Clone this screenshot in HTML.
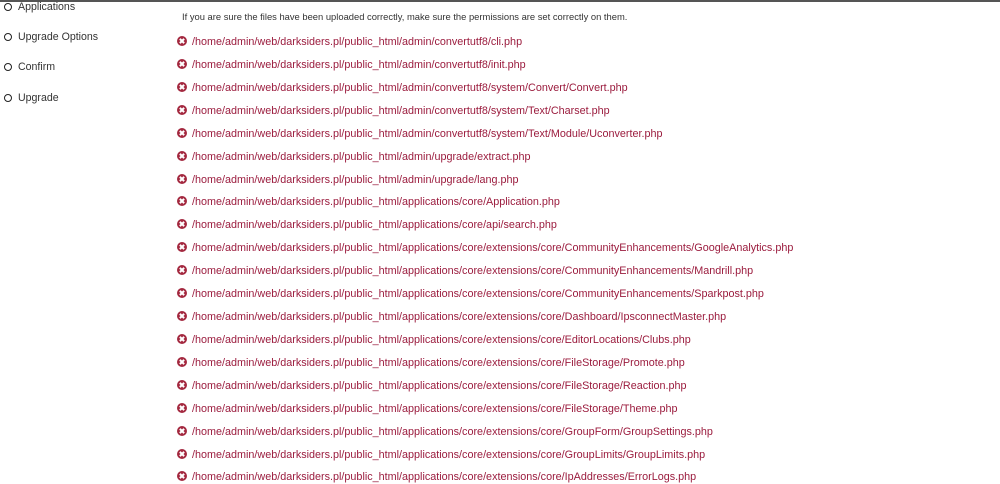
<html><head><style>
body{margin:0;width:1000px;height:482px;background:#fff;font-family:"Liberation Sans",sans-serif;overflow:hidden;position:relative}
.top{position:absolute;left:0;top:0;width:1000px;height:2px;background:#555}
.nav{position:absolute;left:4px;font-size:10.6px;color:#333;line-height:14px}
.nav span{display:inline-block;width:6px;height:6px;border:1.5px solid #222;border-radius:50%;margin-right:6px;vertical-align:-1px}
.msg{position:absolute;left:182px;top:11px;font-size:9.4px;color:#333}
.r{position:absolute;left:177px;font-size:10.8px;color:#9b1c3e;line-height:14px;white-space:nowrap}
.r i{display:inline-block;width:10px;height:10px;border-radius:50%;background:#a3283f;margin-right:5px;vertical-align:-1px;position:relative}
.r i:before,.r i:after{content:"";position:absolute;left:4px;top:2px;width:2px;height:6px;background:#fff;transform:rotate(45deg)}
.r i:after{transform:rotate(-45deg)}
#w{position:absolute;left:0;top:1px;width:1000px;height:482px}
</style></head><body>
<div class="top"></div>
<div class="nav" style="top:0px"><span></span>Applications</div>
<div class="nav" style="top:30px"><span></span>Upgrade Options</div>
<div class="nav" style="top:60px"><span></span>Confirm</div>
<div class="nav" style="top:91px"><span></span>Upgrade</div>
<div class="msg">If you are sure the files have been uploaded correctly, make sure the permissions are set correctly on them.</div>
<div id="w">
<div class="r" style="top:34px"><i></i>/home/admin/web/darksiders.pl/public_html/admin/convertutf8/cli.php</div>
<div class="r" style="top:57px"><i></i>/home/admin/web/darksiders.pl/public_html/admin/convertutf8/init.php</div>
<div class="r" style="top:80px"><i></i>/home/admin/web/darksiders.pl/public_html/admin/convertutf8/system/Convert/Convert.php</div>
<div class="r" style="top:103px"><i></i>/home/admin/web/darksiders.pl/public_html/admin/convertutf8/system/Text/Charset.php</div>
<div class="r" style="top:126px"><i></i>/home/admin/web/darksiders.pl/public_html/admin/convertutf8/system/Text/Module/Uconverter.php</div>
<div class="r" style="top:149px"><i></i>/home/admin/web/darksiders.pl/public_html/admin/upgrade/extract.php</div>
<div class="r" style="top:172px"><i></i>/home/admin/web/darksiders.pl/public_html/admin/upgrade/lang.php</div>
<div class="r" style="top:194px"><i></i>/home/admin/web/darksiders.pl/public_html/applications/core/Application.php</div>
<div class="r" style="top:217px"><i></i>/home/admin/web/darksiders.pl/public_html/applications/core/api/search.php</div>
<div class="r" style="top:240px"><i></i>/home/admin/web/darksiders.pl/public_html/applications/core/extensions/core/CommunityEnhancements/GoogleAnalytics.php</div>
<div class="r" style="top:263px"><i></i>/home/admin/web/darksiders.pl/public_html/applications/core/extensions/core/CommunityEnhancements/Mandrill.php</div>
<div class="r" style="top:286px"><i></i>/home/admin/web/darksiders.pl/public_html/applications/core/extensions/core/CommunityEnhancements/Sparkpost.php</div>
<div class="r" style="top:309px"><i></i>/home/admin/web/darksiders.pl/public_html/applications/core/extensions/core/Dashboard/IpsconnectMaster.php</div>
<div class="r" style="top:332px"><i></i>/home/admin/web/darksiders.pl/public_html/applications/core/extensions/core/EditorLocations/Clubs.php</div>
<div class="r" style="top:355px"><i></i>/home/admin/web/darksiders.pl/public_html/applications/core/extensions/core/FileStorage/Promote.php</div>
<div class="r" style="top:378px"><i></i>/home/admin/web/darksiders.pl/public_html/applications/core/extensions/core/FileStorage/Reaction.php</div>
<div class="r" style="top:401px"><i></i>/home/admin/web/darksiders.pl/public_html/applications/core/extensions/core/FileStorage/Theme.php</div>
<div class="r" style="top:424px"><i></i>/home/admin/web/darksiders.pl/public_html/applications/core/extensions/core/GroupForm/GroupSettings.php</div>
<div class="r" style="top:447px"><i></i>/home/admin/web/darksiders.pl/public_html/applications/core/extensions/core/GroupLimits/GroupLimits.php</div>
<div class="r" style="top:469px"><i></i>/home/admin/web/darksiders.pl/public_html/applications/core/extensions/core/IpAddresses/ErrorLogs.php</div>
</div>
</body></html>
